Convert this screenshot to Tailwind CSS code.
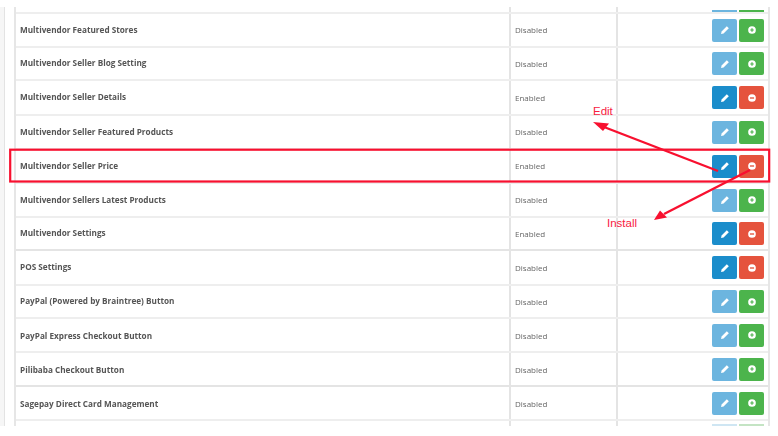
<!DOCTYPE html>
<html lang="en">
<head>
  <meta charset="UTF-8" />
  <title>Modules</title>
  <script src="https://cdn.jsdelivr.net/npm/@tailwindcss/browser@4"></script>
</head>
<body class="bg-white w-[778px] h-[436px] overflow-hidden relative font-['Open_Sans',sans-serif]">
  <!-- page strip + table -->
  <div class="pt-[7px] h-[426px]">
    <div class="h-[419px] overflow-hidden flex">
      <div class="w-[5px] bg-[#f6f6f6] border-r border-[#e3e3e3]"></div>
      <div class="w-[9px]"></div>
      <div id="rows" class="w-[756px] border-l-2 border-r-2 border-[#e6e6e6] text-[8px] text-[#666]">

        <div class="h-[7px] flex border-b-2 border-[#eee]">
          <div class="w-[493px]"></div>
          <div class="w-[107px] border-l-2 border-[#e4e4e4]"></div>
          <div class="flex-1 border-l-2 border-[#e4e4e4] flex justify-end gap-[2px] pr-[4px] items-end">
            <div class="w-[25px] h-[2px] bg-[#6cb5df]"></div>
            <div class="w-[25px] h-[2px] bg-[#4cb44c]"></div>
          </div>
        </div>

        <!-- rows -->
        <div class="h-[34px] flex items-center border-b-2 border-[#eee]">
          <div class="w-[493px] pl-[4px] font-bold text-[8.2px] text-[#555] blur-[0.3px]">Multivendor Featured Stores</div>
          <div class="w-[107px] h-full flex items-center border-l-2 border-[#e4e4e4] pl-[4px]"><span class="blur-[0.3px]">Disabled</span></div>
          <div class="flex-1 h-full border-l-2 border-[#e4e4e4] flex justify-end items-center gap-[2px] pr-[4px]">
            <div class="w-[25px] h-[23px] rounded-[2px] bg-[#6cb5df] flex items-center justify-center"><svg width="10" height="10" viewBox="0 0 10 10"><path d="M1 9l.6-2.6L6.800 1.200 8.800 3.200 3.600 8.400z" fill="#fff"/></svg></div>
            <div class="w-[25px] h-[23px] rounded-[2px] bg-[#4cb44c] flex items-center justify-center"><svg width="8" height="8" viewBox="0 0 10 10"><circle cx="5" cy="5" r="4.800" fill="#fff"/><path d="M2.800 5h4.400M5 2.800v4.400" stroke="#4cb44c" stroke-width="1.500"/></svg></div>
          </div>
        </div>
        <div class="h-[33px] flex items-center border-b-2 border-[#eee]">
          <div class="w-[493px] pl-[4px] font-bold text-[8.2px] text-[#555] blur-[0.3px]">Multivendor Seller Blog Setting</div>
          <div class="w-[107px] h-full flex items-center border-l-2 border-[#e4e4e4] pl-[4px]"><span class="blur-[0.3px]">Disabled</span></div>
          <div class="flex-1 h-full border-l-2 border-[#e4e4e4] flex justify-end items-center gap-[2px] pr-[4px]">
            <div class="w-[25px] h-[23px] rounded-[2px] bg-[#6cb5df] flex items-center justify-center"><svg width="10" height="10" viewBox="0 0 10 10"><path d="M1 9l.6-2.6L6.800 1.200 8.800 3.200 3.600 8.400z" fill="#fff"/></svg></div>
            <div class="w-[25px] h-[23px] rounded-[2px] bg-[#4cb44c] flex items-center justify-center"><svg width="8" height="8" viewBox="0 0 10 10"><circle cx="5" cy="5" r="4.800" fill="#fff"/><path d="M2.800 5h4.400M5 2.800v4.400" stroke="#4cb44c" stroke-width="1.500"/></svg></div>
          </div>
        </div>
        <div class="h-[35px] flex items-center border-b-2 border-[#eee]">
          <div class="w-[493px] pl-[4px] font-bold text-[8.2px] text-[#555] blur-[0.3px]">Multivendor Seller Details</div>
          <div class="w-[107px] h-full flex items-center border-l-2 border-[#e4e4e4] pl-[4px]"><span class="blur-[0.3px]">Enabled</span></div>
          <div class="flex-1 h-full border-l-2 border-[#e4e4e4] flex justify-end items-center gap-[2px] pr-[4px]">
            <div class="w-[25px] h-[23px] rounded-[2px] bg-[#1b8dcb] flex items-center justify-center"><svg width="10" height="10" viewBox="0 0 10 10"><path d="M1 9l.6-2.6L6.800 1.200 8.800 3.200 3.600 8.400z" fill="#fff"/></svg></div>
            <div class="w-[25px] h-[23px] rounded-[2px] bg-[#e5533d] flex items-center justify-center"><svg width="8" height="8" viewBox="0 0 10 10"><circle cx="5" cy="5" r="4.800" fill="#fff"/><path d="M2.400 5h5.200" stroke="#e5533d" stroke-width="1.700"/></svg></div>
          </div>
        </div>
        <div class="h-[34px] flex items-center border-b-2 border-[#eee]">
          <div class="w-[493px] pl-[4px] font-bold text-[8.2px] text-[#555] blur-[0.3px]">Multivendor Seller Featured Products</div>
          <div class="w-[107px] h-full flex items-center border-l-2 border-[#e4e4e4] pl-[4px]"><span class="blur-[0.3px]">Disabled</span></div>
          <div class="flex-1 h-full border-l-2 border-[#e4e4e4] flex justify-end items-center gap-[2px] pr-[4px]">
            <div class="w-[25px] h-[23px] rounded-[2px] bg-[#6cb5df] flex items-center justify-center"><svg width="10" height="10" viewBox="0 0 10 10"><path d="M1 9l.6-2.6L6.800 1.200 8.800 3.200 3.600 8.400z" fill="#fff"/></svg></div>
            <div class="w-[25px] h-[23px] rounded-[2px] bg-[#4cb44c] flex items-center justify-center"><svg width="8" height="8" viewBox="0 0 10 10"><circle cx="5" cy="5" r="4.800" fill="#fff"/><path d="M2.800 5h4.400M5 2.800v4.400" stroke="#4cb44c" stroke-width="1.500"/></svg></div>
          </div>
        </div>
        <div class="h-[34px] flex items-center border-b-2 border-[#eee]">
          <div class="w-[493px] pl-[4px] font-bold text-[8.2px] text-[#555] blur-[0.3px]">Multivendor Seller Price</div>
          <div class="w-[107px] h-full flex items-center border-l-2 border-[#e4e4e4] pl-[4px]"><span class="blur-[0.3px]">Enabled</span></div>
          <div class="flex-1 h-full border-l-2 border-[#e4e4e4] flex justify-end items-center gap-[2px] pr-[4px]">
            <div class="w-[25px] h-[23px] rounded-[2px] bg-[#1b8dcb] flex items-center justify-center"><svg width="10" height="10" viewBox="0 0 10 10"><path d="M1 9l.6-2.6L6.800 1.200 8.800 3.200 3.600 8.400z" fill="#fff"/></svg></div>
            <div class="w-[25px] h-[23px] rounded-[2px] bg-[#e5533d] flex items-center justify-center"><svg width="8" height="8" viewBox="0 0 10 10"><circle cx="5" cy="5" r="4.800" fill="#fff"/><path d="M2.400 5h5.200" stroke="#e5533d" stroke-width="1.700"/></svg></div>
          </div>
        </div>
        <div class="h-[34px] flex items-center border-b-2 border-[#eee]">
          <div class="w-[493px] pl-[4px] font-bold text-[8.2px] text-[#555] blur-[0.3px]">Multivendor Sellers Latest Products</div>
          <div class="w-[107px] h-full flex items-center border-l-2 border-[#e4e4e4] pl-[4px]"><span class="blur-[0.3px]">Disabled</span></div>
          <div class="flex-1 h-full border-l-2 border-[#e4e4e4] flex justify-end items-center gap-[2px] pr-[4px]">
            <div class="w-[25px] h-[23px] rounded-[2px] bg-[#6cb5df] flex items-center justify-center"><svg width="10" height="10" viewBox="0 0 10 10"><path d="M1 9l.6-2.6L6.800 1.200 8.800 3.200 3.600 8.400z" fill="#fff"/></svg></div>
            <div class="w-[25px] h-[23px] rounded-[2px] bg-[#4cb44c] flex items-center justify-center"><svg width="8" height="8" viewBox="0 0 10 10"><circle cx="5" cy="5" r="4.800" fill="#fff"/><path d="M2.800 5h4.400M5 2.800v4.400" stroke="#4cb44c" stroke-width="1.500"/></svg></div>
          </div>
        </div>
        <div class="h-[33px] flex items-center border-b-2 border-[#e4e4e4]">
          <div class="w-[493px] pl-[4px] font-bold text-[8.2px] text-[#555] blur-[0.3px]">Multivendor Settings</div>
          <div class="w-[107px] h-full flex items-center border-l-2 border-[#e4e4e4] pl-[4px]"><span class="blur-[0.3px]">Enabled</span></div>
          <div class="flex-1 h-full border-l-2 border-[#e4e4e4] flex justify-end items-center gap-[2px] pr-[4px]">
            <div class="w-[25px] h-[23px] rounded-[2px] bg-[#1b8dcb] flex items-center justify-center"><svg width="10" height="10" viewBox="0 0 10 10"><path d="M1 9l.6-2.6L6.800 1.200 8.800 3.200 3.600 8.400z" fill="#fff"/></svg></div>
            <div class="w-[25px] h-[23px] rounded-[2px] bg-[#e5533d] flex items-center justify-center"><svg width="8" height="8" viewBox="0 0 10 10"><circle cx="5" cy="5" r="4.800" fill="#fff"/><path d="M2.400 5h5.200" stroke="#e5533d" stroke-width="1.700"/></svg></div>
          </div>
        </div>
        <div class="h-[35px] flex items-center border-b-2 border-[#eee]">
          <div class="w-[493px] pl-[4px] font-bold text-[8.2px] text-[#555] blur-[0.3px]">POS Settings</div>
          <div class="w-[107px] h-full flex items-center border-l-2 border-[#e4e4e4] pl-[4px]"><span class="blur-[0.3px]">Disabled</span></div>
          <div class="flex-1 h-full border-l-2 border-[#e4e4e4] flex justify-end items-center gap-[2px] pr-[4px]">
            <div class="w-[25px] h-[23px] rounded-[2px] bg-[#1b8dcb] flex items-center justify-center"><svg width="10" height="10" viewBox="0 0 10 10"><path d="M1 9l.6-2.6L6.800 1.200 8.800 3.200 3.600 8.400z" fill="#fff"/></svg></div>
            <div class="w-[25px] h-[23px] rounded-[2px] bg-[#e5533d] flex items-center justify-center"><svg width="8" height="8" viewBox="0 0 10 10"><circle cx="5" cy="5" r="4.800" fill="#fff"/><path d="M2.400 5h5.200" stroke="#e5533d" stroke-width="1.700"/></svg></div>
          </div>
        </div>
        <div class="h-[33px] flex items-center border-b-2 border-[#eee]">
          <div class="w-[493px] pl-[4px] font-bold text-[8.2px] text-[#555] blur-[0.3px]">PayPal (Powered by Braintree) Button</div>
          <div class="w-[107px] h-full flex items-center border-l-2 border-[#e4e4e4] pl-[4px]"><span class="blur-[0.3px]">Disabled</span></div>
          <div class="flex-1 h-full border-l-2 border-[#e4e4e4] flex justify-end items-center gap-[2px] pr-[4px]">
            <div class="w-[25px] h-[23px] rounded-[2px] bg-[#6cb5df] flex items-center justify-center"><svg width="10" height="10" viewBox="0 0 10 10"><path d="M1 9l.6-2.6L6.800 1.200 8.800 3.200 3.600 8.400z" fill="#fff"/></svg></div>
            <div class="w-[25px] h-[23px] rounded-[2px] bg-[#4cb44c] flex items-center justify-center"><svg width="8" height="8" viewBox="0 0 10 10"><circle cx="5" cy="5" r="4.800" fill="#fff"/><path d="M2.800 5h4.400M5 2.800v4.400" stroke="#4cb44c" stroke-width="1.500"/></svg></div>
          </div>
        </div>
        <div class="h-[34px] flex items-center border-b-2 border-[#eee]">
          <div class="w-[493px] pl-[4px] pt-[2px] font-bold text-[8.2px] text-[#555] blur-[0.3px]">PayPal Express Checkout Button</div>
          <div class="w-[107px] h-full flex items-center border-l-2 border-[#e4e4e4] pl-[4px] pt-[2px]"><span class="blur-[0.3px]">Disabled</span></div>
          <div class="flex-1 h-full border-l-2 border-[#e4e4e4] flex justify-end items-center gap-[2px] pr-[4px]">
            <div class="w-[25px] h-[23px] rounded-[2px] bg-[#6cb5df] flex items-center justify-center"><svg width="10" height="10" viewBox="0 0 10 10"><path d="M1 9l.6-2.6L6.800 1.200 8.800 3.200 3.600 8.400z" fill="#fff"/></svg></div>
            <div class="w-[25px] h-[23px] rounded-[2px] bg-[#4cb44c] flex items-center justify-center"><svg width="8" height="8" viewBox="0 0 10 10"><circle cx="5" cy="5" r="4.800" fill="#fff"/><path d="M2.800 5h4.400M5 2.800v4.400" stroke="#4cb44c" stroke-width="1.500"/></svg></div>
          </div>
        </div>
        <div class="h-[34px] flex items-center border-b-2 border-[#e4e4e4]">
          <div class="w-[493px] pl-[4px] pt-[2px] font-bold text-[8.2px] text-[#555] blur-[0.3px]">Pilibaba Checkout Button</div>
          <div class="w-[107px] h-full flex items-center border-l-2 border-[#e4e4e4] pl-[4px] pt-[2px]"><span class="blur-[0.3px]">Disabled</span></div>
          <div class="flex-1 h-full border-l-2 border-[#e4e4e4] flex justify-end items-center gap-[2px] pr-[4px]">
            <div class="w-[25px] h-[23px] rounded-[2px] bg-[#6cb5df] flex items-center justify-center"><svg width="10" height="10" viewBox="0 0 10 10"><path d="M1 9l.6-2.6L6.800 1.200 8.800 3.200 3.600 8.400z" fill="#fff"/></svg></div>
            <div class="w-[25px] h-[23px] rounded-[2px] bg-[#4cb44c] flex items-center justify-center"><svg width="8" height="8" viewBox="0 0 10 10"><circle cx="5" cy="5" r="4.800" fill="#fff"/><path d="M2.800 5h4.400M5 2.800v4.400" stroke="#4cb44c" stroke-width="1.500"/></svg></div>
          </div>
        </div>
        <div class="h-[34px] flex items-center border-b-2 border-[#eee]">
          <div class="w-[493px] pl-[4px] pt-[2px] font-bold text-[8.2px] text-[#555] blur-[0.3px]">Sagepay Direct Card Management</div>
          <div class="w-[107px] h-full flex items-center border-l-2 border-[#e4e4e4] pl-[4px] pt-[2px]"><span class="blur-[0.3px]">Disabled</span></div>
          <div class="flex-1 h-full border-l-2 border-[#e4e4e4] flex justify-end items-center gap-[2px] pr-[4px]">
            <div class="w-[25px] h-[23px] rounded-[2px] bg-[#6cb5df] flex items-center justify-center"><svg width="10" height="10" viewBox="0 0 10 10"><path d="M1 9l.6-2.6L6.800 1.200 8.800 3.200 3.600 8.400z" fill="#fff"/></svg></div>
            <div class="w-[25px] h-[23px] rounded-[2px] bg-[#4cb44c] flex items-center justify-center"><svg width="8" height="8" viewBox="0 0 10 10"><circle cx="5" cy="5" r="4.800" fill="#fff"/><path d="M2.800 5h4.400M5 2.800v4.400" stroke="#4cb44c" stroke-width="1.500"/></svg></div>
          </div>
        </div>
        <div class="h-[8px] flex">
          <div class="w-[493px]"></div>
          <div class="w-[107px] border-l-2 border-[#e4e4e4]"></div>
          <div class="flex-1 border-l-2 border-[#e4e4e4] flex justify-end gap-[2px] pr-[4px] pt-[3px]">
            <div class="w-[25px] h-[2px] bg-[#cfe6f3]"></div>
            <div class="w-[25px] h-[2px] bg-[#c4e4c4]"></div>
          </div>
        </div>
      </div>
    </div>
  </div>

  <!-- red annotations drawn over the screenshot -->
  <svg class="absolute left-0 top-0" width="778" height="436" viewBox="0 0 778 436" fill="none">
    <rect x="10.200" y="149.700" width="759" height="31.800" stroke="#f8102f" stroke-width="2.200"/>
    <path d="M718 171L604 127" stroke="#f8102f" stroke-width="2.400"/>
    <path d="M593 122L609 123.500L603 131z" fill="#f8102f"/>
    <path d="M750 170L664 214" stroke="#f8102f" stroke-width="2.400"/>
    <path d="M654 220L660 210.500L667 217.500z" fill="#f8102f"/>
  </svg>
  <span class="absolute left-[593px] top-[103px] text-[11.500px] leading-[16px] text-[#f8203f] font-['Liberation_Sans',sans-serif]">Edit</span>
  <span class="absolute left-[607px] top-[215px] text-[11.500px] leading-[16px] text-[#f8203f] font-['Liberation_Sans',sans-serif]">Install</span>
</body>
</html>
